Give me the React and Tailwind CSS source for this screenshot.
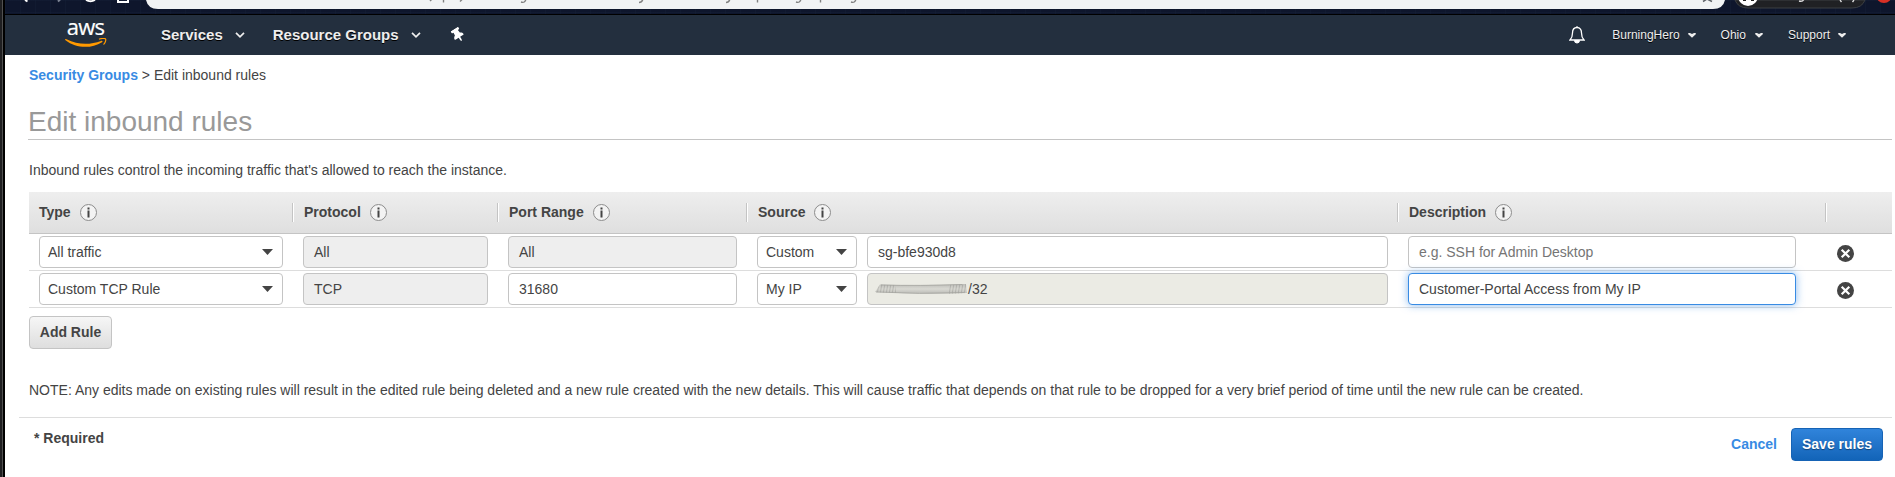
import { FaThumbtack } from 'react-icons/fa'

const MARKS = [
  [430, 'M430 1l2 -2'], [444, 'M443.5 0v2.5'], [461, 'M460 1.5l2 -2'],
  [524, 'M521 2q4 1.500 5 -3'], [641, 'M639 2.500q3 0 4 -3.500'], [728, 'M726 2.500q3 0 4 -3.500'],
  [758, 'M757.500 0v2.500'], [798, 'M796 2q4 1.500 5 -3'], [820, 'M820.500 0v2.500'], [853, 'M851 2q4 1.500 5 -3'],
]

function BrowserBar() {
  return (
    <div className="relative h-[15px] border-b border-black bg-[#0e162c] bg-[linear-gradient(#17223a66_1px,transparent_1px),linear-gradient(90deg,#17223a66_1px,transparent_1px)] bg-[size:15px_12px]">
      <svg className="absolute inset-0" width="1890" height="14" viewBox="5 0 1890 14" fill="none">
        <path d="M25 0l2.500 1.500" stroke="#fff" strokeWidth="2" />
        <path d="M58 1.500l2 -2" stroke="#7d8494" strokeWidth="2" />
        <path d="M86 0q4.500 2.500 9 0" stroke="#fff" strokeWidth="2" />
        <path d="M118 -4v6h10v-6" stroke="#fff" strokeWidth="2" />
        <path d="M146 0q2 9 12 9H1713q10 0 12 -9z" fill="#f1f3f4" />
        {MARKS.map(([x, d]) => (
          <path key={x} d={d} stroke="#808080" strokeWidth="1.400" />
        ))}
        <path d="M1703 1.500l4 -2.500l5 2.500" stroke="#5f6368" strokeWidth="1.500" />
        <path d="M1735 0q3 8 13 8H1852q10 0 13 -8z" fill="#202124" stroke="#3c4043" />
        <circle cx="1748" cy="-4" r="10" fill="#fff" />
        <path d="M1743 0h3M1751 0h3" stroke="#222" strokeWidth="2" />
        <path d="M1799 1q4 1 5 -2M1840 0l1.500 2M1854 0l-1.500 2" stroke="#ddd" strokeWidth="1.300" />
        <circle cx="1884" cy="-5" r="8" fill="#d93025" />
      </svg>
    </div>
  )
}

function Chevron({ small }) {
  return small ? (
    <svg width="8" height="5" viewBox="0 0 8 5"><path d="M0.500 0h1.500l2 1l2 -1h1.500l.5 1l-4 3.800l-4 -3.800z" fill="#eee" /></svg>
  ) : (
    <svg width="10" height="6" viewBox="0 0 10 6" fill="none"><path d="M1 .8l4 4l4 -4" stroke="#eee" strokeWidth="1.700" /></svg>
  )
}

function NavBar() {
  return (
    <nav className="flex h-10 items-center bg-[#232f3e] text-[#eee] [text-shadow:0_1px_0_#000]">
      <div className="ml-[59px] flex h-10 w-[43px] flex-col items-center">
        <span className="h-[23px] font-['Open_Sans',sans-serif] text-[22px] leading-[22px] tracking-[-0.8px] text-white [-webkit-text-stroke:0.2px_#fff] [text-shadow:none]">aws</span>
        <svg width="42" height="10" viewBox="0 0 42 10" fill="none">
          <path d="M0 1.500C0 .8 .8 .8 1.500 1.300C13 7 25 7 36 3C37.500 2.500 38 3.400 37 4.200C26 11 11 10.400 0.500 2.200z" fill="#f90" />
          <path d="M34 1.200C36 .3 39.500 .2 40.500 .8C41.300 2 40 5.500 38.500 6.500" stroke="#f90" strokeWidth="1.200" />
        </svg>
      </div>
      <div className="ml-[54px] flex items-center gap-3 text-[15px] font-bold"><span>Services</span><Chevron /></div>
      <div className="ml-7 flex items-center gap-3 text-[15px] font-bold"><span>Resource Groups</span><Chevron /></div>
      <FaThumbtack className="ml-[30px] -rotate-[32deg] text-white" size={14} />
      <div className="ml-auto flex items-center text-xs">
        <svg className="mr-[27px]" width="16" height="18" viewBox="0 0 16 18" fill="none">
          <path d="M8 1.500C4.800 1.500 3.500 4 3.500 7C3.500 10.500 2.500 12.500 1 14h14C13.500 12.500 12.500 10.500 12.500 7C12.500 4 11.200 1.500 8 1.500z" stroke="#fff" strokeWidth="1.300" />
          <path d="M8 0v2M5.500 14.500a2.500 2.500 0 0 0 5 0z" fill="#fff" stroke="#fff" />
        </svg>
        <span className="mr-2">BurningHero</span><Chevron small />
        <span className="mr-[9px] ml-[25px]">Ohio</span><Chevron small />
        <span className="mr-2 ml-[25px]">Support</span><Chevron small />
      </div>
      <div className="w-[49px]" />
    </nav>
  )
}

function Info() {
  return (
    <svg width="17" height="17" viewBox="0 0 17 17">
      <circle cx="8.500" cy="8.500" r="8" fill="#f3f3f3" stroke="#8c8c8c" />
      <path d="M7.500 3.500h2v2h-2zM7.500 6.500h2v7h-2z" fill="#444" />
    </svg>
  )
}

function HeadCell({ label, className }) {
  return (
    <div className={'flex h-[19px] items-center gap-[9px] border-r border-white ' + className}>
      <span>{label}</span><Info />
      <span className="ml-auto h-[19px] w-px bg-[#c4c4c4]" />
    </div>
  )
}

function Select({ value, className }) {
  return (
    <div className={'flex h-8 items-center justify-between rounded-[4px] border border-[#c4c4c4] bg-white pr-[9px] pl-2 ' + className}>
      <span>{value}</span>
      <svg width="11" height="6" viewBox="0 0 11 6"><path d="M0 0h11l-5.500 6z" fill="#444" /></svg>
    </div>
  )
}

function Field({ children, className }) {
  return <div className={'flex h-8 items-center rounded-[4px] border px-[10px] ' + className}>{children}</div>
}

function Remove() {
  return (
    <svg className="mt-[3px] ml-[41px]" width="17" height="17" viewBox="0 0 17 17">
      <circle cx="8.500" cy="8.500" r="8.500" fill="#444" />
      <path d="M4.700 4.700l7.600 7.600M12.300 4.700l-7.600 7.600" stroke="#fff" strokeWidth="2.200" />
    </svg>
  )
}

function Redaction() {
  return (
    <svg className="-ml-[4px]" width="94" height="12" viewBox="0 0 94 12" fill="none">
      <defs>
        <pattern id="hatch" width="3" height="12" patternUnits="userSpaceOnUse"><path d="M0 12L2 0" stroke="#8d8d89" strokeWidth=".7" /></pattern>
        <linearGradient id="smear" x1="0" x2="0" y1="0" y2="1">
          <stop offset="0" stopColor="#bdbdb8" /><stop offset=".5" stopColor="#d8d8d2" /><stop offset="1" stopColor="#bcbcb7" />
        </linearGradient>
      </defs>
      <path d="M1 9L6 1.500Q45 3 92 1L93 10Q50 12 1 9z" fill="url(#smear)" />
      <path d="M1 9L6 1.500Q14 2 22 2V10Q10 10 1 9zM74 2L92 1L93 10L74 11z" fill="url(#hatch)" opacity=".6" />
      <path d="M2 9Q45 11.500 90 9.500M7 2Q45 3 88 1.500" stroke="#a4a49f" strokeWidth=".8" />
    </svg>
  )
}

function Rule({ type, protocol, port, portClass, source, children }) {
  return (
    <div className="flex h-[37px] items-center border-b border-[#ddd] pl-[10px]">
      <Select value={type} className="w-[244px]" />
      <Field className="ml-5 w-[185px] border-[#c4c4c4] bg-[#eee]">{protocol}</Field>
      <Field className={'ml-5 w-[229px] border-[#c4c4c4] ' + portClass}>{port}</Field>
      <Select value={source} className="ml-5 w-[100px]" />
      {children}
      <Remove />
    </div>
  )
}

export default function App() {
  return (
    <div className="flex h-[477px] w-[1895px] overflow-hidden bg-white font-['Liberation_Sans',Arial,sans-serif] text-sm text-[#444]">
      <div className="w-[5px] shrink-0 border-r-2 border-black bg-[linear-gradient(90deg,#1f1f21_2px,#505050_2px)]" />
      <div className="w-[1890px] shrink-0">
        <BrowserBar />
        <NavBar />
        <main className="pr-[3px] pl-6">
          <div className="pt-[10px] leading-5"><a className="font-bold text-[#388be3]">Security Groups</a> &gt; Edit inbound rules</div>
          <h1 className="-ml-px mt-[20px] h-[35px] border-b border-[#c4c4c4] text-[28px] leading-[34px] text-[#999]">Edit inbound rules</h1>
          <p className="mt-[20px] leading-5">Inbound rules control the incoming traffic that's allowed to reach the instance.</p>
          <section className="mt-3">
            <div className="flex h-[42px] items-center border-b border-[#c4c4c4] bg-linear-to-b from-[#eee] to-[#dfdfdf] pb-px font-bold">
              <HeadCell label="Type" className="w-[265px] pl-[10px]" />
              <HeadCell label="Protocol" className="w-[205px] pl-[10px]" />
              <HeadCell label="Port Range" className="w-[249px] pl-[10px]" />
              <HeadCell label="Source" className="w-[651px] pl-[10px]" />
              <HeadCell label="Description" className="w-[428px] pl-[10px]" />
            </div>
            <Rule type="All traffic" protocol="All" port="All" portClass="bg-[#eee]" source="Custom">
              <Field className="ml-[10px] w-[521px] border-[#c4c4c4]">sg-bfe930d8</Field>
              <Field className="ml-5 w-[388px] border-[#c4c4c4] text-[#757575]">e.g. SSH for Admin Desktop</Field>
            </Rule>
            <Rule type="Custom TCP Rule" protocol="TCP" port="31680" portClass="bg-white" source="My IP">
              <Field className="ml-[10px] w-[521px] border-[#c4c4c4] bg-[#ebebe4]"><Redaction />/32</Field>
              <Field className="ml-5 w-[388px] border-[#388be3] bg-white shadow-[0_0_8px_#388be399]">Customer-Portal Access from My IP</Field>
            </Rule>
          </section>
          <button className="mt-2 block h-[33px] w-[83px] rounded-[4px] border border-[#c4c4c4] bg-linear-to-b from-[#f6f6f6] to-[#dedede] pb-[2px] font-bold">Add Rule</button>
          <p className="mt-[31px] leading-5">NOTE: Any edits made on existing rules will result in the edited rule being deleted and a new rule created with the new details. This will cause traffic that depends on that rule to be dropped for a very brief period of time until the new rule can be created.</p>
          <footer className="-ml-[10px] mt-[17px] flex items-start border-t border-[#ddd] pt-[10px] pr-[9px] pl-[15px] font-bold">
            <span className="leading-5">* Required</span>
            <a className="ml-auto leading-[33px] text-[#388be3]">Cancel</a>
            <button className="ml-[14px] h-[33px] w-[92px] rounded-[4px] border border-[#1663b5] bg-linear-to-b from-[#3084db] to-[#1264b8] pb-[2px] text-white [text-shadow:0_1px_1px_#0006]">Save rules</button>
          </footer>
        </main>
      </div>
    </div>
  )
}
